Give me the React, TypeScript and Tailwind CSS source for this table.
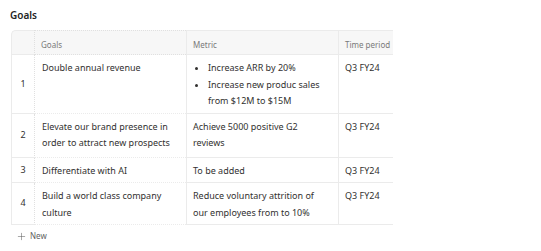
import { Plus } from 'lucide-react';

const rows = [
  { n: 1, goal: 'Double annual revenue', metric: ['Increase ARR by 20%', 'Increase new produc sales from $12M to $15M'], period: 'Q3 FY24', pb: 'pb-[3px]' },
  { n: 2, goal: 'Elevate our brand presence in order to attract new prospects', metric: 'Achieve 5000 positive G2 reviews', period: 'Q3 FY24', pb: 'pb-[5px]' },
  { n: 3, goal: 'Differentiate with AI', metric: 'To be added', period: 'Q3 FY24', pb: 'pb-[3px]' },
  { n: 4, goal: 'Build a world class company culture', metric: 'Reduce voluntary attrition of our employees from to 10%', period: 'Q3 FY24', pb: 'pb-[3px]' },
];

export default function App() {
  return (
    <div className="w-[541px] h-[251px] bg-white font-['Noto_Sans',sans-serif] text-[#323130]">
      {/* Heading */}
      <div className="pt-[7px] pl-[10px] text-[10px] leading-[16px] font-semibold text-[#242424]">Goals</div>

      {/* Table, clipped at the right like the reference */}
      <div className="mt-[7px] ml-[11px] w-[382px] overflow-hidden">
        <table className="table-fixed border-separate border-spacing-0 w-[450px] text-[9px] leading-[16.5px]">
          <colgroup>
            <col className="w-[23px]" />
            <col className="w-[152px]" />
            <col className="w-[152px]" />
            <col className="w-[123px]" />
          </colgroup>
          <thead>
            <tr className="bg-[#f7f7f7] text-[8px] text-[#7a7a7a]">
              <th className="h-[25px] border-l border-t border-b border-[#ebebeb] rounded-tl-[5px]" />
              <th className="h-[25px] border-t border-b border-l border-dotted border-[#e0e0e0] pl-[6px] pt-[5px] text-left font-normal">Goals</th>
              <th className="h-[25px] border-t border-b border-l border-[#ebebeb] pl-[6px] pt-[5px] text-left font-normal">Metric</th>
              <th className="h-[25px] border-t border-b border-l border-[#ebebeb] pl-[6px] pt-[5px] text-left font-normal">Time period</th>
            </tr>
          </thead>
          <tbody>
            {rows.map((r) => (
              <tr key={r.n}>
                <td className="border-l border-b border-[#ebebeb] text-center align-middle">{r.n}</td>
                <td className={`border-l border-b border-dotted border-l-[#e0e0e0] border-b-[#ebebeb] pl-[7px] pr-[14px] pt-[5px] ${r.pb} align-top`}>{r.goal}</td>
                <td className={`border-l border-b border-[#ebebeb] pl-[6px] pr-[14px] pt-[5px] ${r.pb} align-top`}>
                  {Array.isArray(r.metric) ? (
                    <ul className="list-disc pl-[15px] marker:text-[9px]">
                      {r.metric.map((m) => (
                        <li key={m}>{m}</li>
                      ))}
                    </ul>
                  ) : (
                    r.metric
                  )}
                </td>
                <td className={`border-l border-b border-[#ebebeb] px-[6px] pt-[5px] ${r.pb} align-top`}>{r.period}</td>
              </tr>
            ))}
          </tbody>
        </table>
      </div>

      {/* New row button */}
      <div className="mt-[5px] ml-[16px] flex items-center gap-[3px] text-[8px] text-[#616161]">
        <Plus size={11} strokeWidth={1.2} />
        <span>New</span>
      </div>
    </div>
  );
}
